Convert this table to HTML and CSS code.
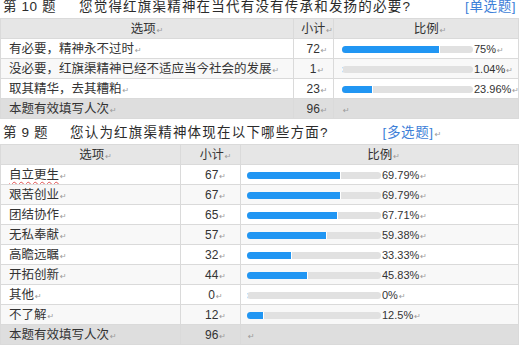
FILE: index.html
```html
<!DOCTYPE html>
<html lang="zh">
<head>
<meta charset="utf-8">
<link rel="stylesheet" href="styles.css">
</head>
<body>
<div class="q-title q-first">
  <span class="q-no q-no-10">第 10 题</span><span class="q-text">您觉得红旗渠精神在当代有没有传承和发扬的必要?</span><span class="q-type">[单选题]</span>
</div>
<table class="stat stat-a">
  <colgroup><col class="c1a"><col class="c2a"><col></colgroup>
  <tr class="head"><td class="opt-h">选项<i>↵</i></td><td class="num">小计<i>↵</i></td><td class="ratio-h">比例<i>↵</i></td></tr>
  <tr><td class="opt">有必要，精神永不过时<i>↵</i></td><td class="num">72<i>↵</i></td><td class="ratio"><span class="bar"><span class="fill" style="width:75%"></span></span><span class="pct">75%<i>↵</i></span></td></tr>
  <tr class="alt"><td class="opt">没必要，红旗渠精神已经不适应当今社会的发展<i>↵</i></td><td class="num">1<i>↵</i></td><td class="ratio"><span class="bar"><span class="fill" style="width:1.04%"></span></span><span class="pct">1.04%<i>↵</i></span></td></tr>
  <tr><td class="opt">取其精华，去其糟粕<i>↵</i></td><td class="num">23<i>↵</i></td><td class="ratio"><span class="bar"><span class="fill" style="width:23.96%"></span></span><span class="pct">23.96%<i>↵</i></span></td></tr>
  <tr class="total"><td class="opt">本题有效填写人次<i>↵</i></td><td class="num">96<i>↵</i></td><td class="ratio"><i>↵</i></td></tr>
</table>
<div class="q-title q-second">
  <span class="q-no q-no-9">第 9 题</span><span class="q-text">您认为红旗渠精神体现在以下哪些方面?</span><span class="q-type">[多选题]<i>↵</i></span>
</div>
<table class="stat stat-b">
  <colgroup><col class="c1b"><col class="c2b"><col></colgroup>
  <tr class="head"><td class="opt-h">选项<i>↵</i></td><td class="num">小计<i>↵</i></td><td class="ratio-h">比例<i>↵</i></td></tr>
  <tr><td class="opt"><span class="squiggle">自立更生</span><i>↵</i></td><td class="num">67<i>↵</i></td><td class="ratio"><span class="bar"><span class="fill" style="width:69.79%"></span></span><span class="pct">69.79%<i>↵</i></span></td></tr>
  <tr class="alt"><td class="opt">艰苦创业<i>↵</i></td><td class="num">67<i>↵</i></td><td class="ratio"><span class="bar"><span class="fill" style="width:69.79%"></span></span><span class="pct">69.79%<i>↵</i></span></td></tr>
  <tr><td class="opt">团结协作<i>↵</i></td><td class="num">65<i>↵</i></td><td class="ratio"><span class="bar"><span class="fill" style="width:67.71%"></span></span><span class="pct">67.71%<i>↵</i></span></td></tr>
  <tr class="alt"><td class="opt">无私奉献<i>↵</i></td><td class="num">57<i>↵</i></td><td class="ratio"><span class="bar"><span class="fill" style="width:59.38%"></span></span><span class="pct">59.38%<i>↵</i></span></td></tr>
  <tr><td class="opt">高瞻远瞩<i>↵</i></td><td class="num">32<i>↵</i></td><td class="ratio"><span class="bar"><span class="fill" style="width:33.33%"></span></span><span class="pct">33.33%<i>↵</i></span></td></tr>
  <tr class="alt"><td class="opt">开拓创新<i>↵</i></td><td class="num">44<i>↵</i></td><td class="ratio"><span class="bar"><span class="fill" style="width:45.83%"></span></span><span class="pct">45.83%<i>↵</i></span></td></tr>
  <tr><td class="opt">其他<i>↵</i></td><td class="num">0<i>↵</i></td><td class="ratio"><span class="bar"><span class="fill" style="width:0%"></span></span><span class="pct">0%<i>↵</i></span></td></tr>
  <tr class="alt"><td class="opt">不了解<i>↵</i></td><td class="num">12<i>↵</i></td><td class="ratio"><span class="bar"><span class="fill" style="width:12.5%"></span></span><span class="pct">12.5%<i>↵</i></span></td></tr>
  <tr class="total"><td class="opt">本题有效填写人次<i>↵</i></td><td class="num">96<i>↵</i></td><td class="ratio"><i>↵</i></td></tr>
</table>
</body>
</html>
```
FILE: styles.css
```css
html, body {
  margin: 0;
  padding: 0;
  background: #ffffff;
}
body {
  width: 520px;
  height: 345px;
  overflow: hidden;
  font-family: "Liberation Sans", "Noto Sans CJK SC", sans-serif;
  color: #333333;
}
i {
  font-style: normal;
  font-size: 8px;
  line-height: 1;
  color: #9a9a9a;
  margin-left: 1px;
  font-family: "DejaVu Sans", sans-serif;
}
.q-title {
  display: flex;
  align-items: center;
  font-size: 13.5px;
  line-height: 14px;
  letter-spacing: 1.2px;
  color: #2b2b2b;
  padding-left: 3px;
  white-space: nowrap;
  box-sizing: border-box;
}
.q-first {
  height: 18px;
  padding-bottom: 4px;
}
.q-second {
  height: 25px;
  padding-top: 3px;
}
.q-no-10 { width: 76px; letter-spacing: 0.6px; }
.q-no-9 { width: 67px; letter-spacing: 0.6px; }
.q-type {
  color: #3e7fd8;
  letter-spacing: 0.6px;
  margin-left: 54px;
}
.stat {
  border-collapse: collapse;
  table-layout: fixed;
  width: 519px;
  font-size: 12.5px;
}
.stat td {
  height: 19px;
  padding: 0;
  border: 1px solid #dadada;
  white-space: nowrap;
  overflow: hidden;
  line-height: 14px;
  vertical-align: middle;
}
.c1a { width: 293px; }
.c2a { width: 40px; }
.c1b { width: 180px; }
.c2b { width: 60px; }
.head td { background: #e6e6e6; }
.alt td { background: #f8f8f8; }
.total td { background: #dedede; }
.opt-h { text-align: center; }
.stat-b .opt-h { padding-left: 10px; }
.stat .opt { padding-left: 8px; }
.stat .num { text-align: center; padding-left: 10px; font-size: 12px; }
.stat-a .num { padding-left: 7px; }
.stat .ratio-h { text-align: center; padding-left: 8px; }
.stat .ratio { padding-left: 8px; }
.stat-b .ratio { padding-left: 6px; }
.bar {
  display: inline-block;
  vertical-align: middle;
  width: 131px;
  height: 7px;
  border-radius: 4px;
  background: #e1e1e1;
  overflow: hidden;
}
.stat-b .bar { width: 134px; }
.fill {
  display: block;
  height: 100%;
  background: #2196f3;
  border-right: 1px solid #ffffff;
  box-sizing: border-box;
}
.pct {
  margin-left: 1px;
  vertical-align: middle;
  font-size: 11px;
  line-height: 1;
}
.squiggle {
  text-decoration: underline wavy #e05050;
  text-decoration-thickness: 1px;
  text-underline-offset: 2px;
}
```
